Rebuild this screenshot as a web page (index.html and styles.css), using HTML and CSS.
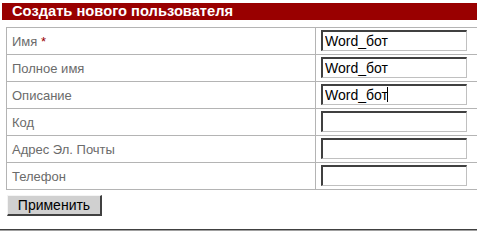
FILE: index.html
```html
<!DOCTYPE html>
<html lang="ru">
<head>
<meta charset="utf-8">
<title>Создать нового пользователя</title>
<link rel="stylesheet" href="styles.css">
</head>
<body>
<div class="page">
  <div class="title-bar">Создать нового пользователя</div>
  <table class="form-table">
    <tr>
      <td class="label">Имя <span class="req">*</span></td>
      <td class="field"><input class="text-input" type="text" value="Word_бот"></td>
    </tr>
    <tr>
      <td class="label">Полное имя</td>
      <td class="field"><input class="text-input" type="text" value="Word_бот"></td>
    </tr>
    <tr>
      <td class="label">Описание</td>
      <td class="field"><span class="caret-wrap"><input class="text-input" type="text" value="Word_бот"><span class="caret"></span></span></td>
    </tr>
    <tr>
      <td class="label">Код</td>
      <td class="field"><input class="text-input" type="text" value=""></td>
    </tr>
    <tr>
      <td class="label">Адрес Эл. Почты</td>
      <td class="field"><input class="text-input" type="text" value=""></td>
    </tr>
    <tr>
      <td class="label">Телефон</td>
      <td class="field"><input class="text-input" type="text" value=""></td>
    </tr>
  </table>
  <div class="actions">
    <button class="apply-btn" type="button">Применить</button>
  </div>
  <div class="bottom-rule"></div>
</div>
</body>
</html>
```

FILE: styles.css
```css
html, body {
  margin: 0;
  padding: 0;
  background: #ffffff;
  overflow: hidden;
}

.page {
  padding: 3px 0 0 2px;
  font-family: "Liberation Sans", Arial, sans-serif;
  width: 490px;
}

.title-bar {
  background: #990000;
  color: #ffffff;
  font-weight: bold;
  font-size: 14.7px;
  height: 17px;
  line-height: 17px;
  padding-left: 10px;
  white-space: nowrap;
}

.form-table {
  margin: 7px 0 0 4px;
  border-collapse: collapse;
  width: 480px;
}

.form-table td {
  border: 1px solid #b4b4b4;
  height: 26px;
  padding: 0;
  box-sizing: border-box;
}

.label {
  width: 309px;
  padding-left: 5px !important;
  font-size: 13px;
  color: #6b6b6b;
  vertical-align: middle;
}

.req {
  color: #990000;
}

.field {
  padding: 2px 0 3px 5px !important;
  vertical-align: top;
}

.text-input {
  display: block;
  box-sizing: border-box;
  width: 146px;
  height: 21px;
  margin: 0;
  padding: 0 0 0 2px;
  border-style: solid;
  border-width: 2px 1px 1px 2px;
  border-color: #404040 #c0c0c0 #c0c0c0 #404040;
  font-family: "Liberation Sans", Arial, sans-serif;
  font-size: 14px;
  color: #000000;
  background: #ffffff;
  outline: none;
}

.caret-wrap {
  position: relative;
  display: block;
  width: 146px;
}

.caret {
  position: absolute;
  left: 66px;
  top: 3px;
  width: 1px;
  height: 15px;
  background: #000000;
}

.actions {
  margin: 5px 0 0 5px;
}

.apply-btn {
  display: block;
  box-sizing: border-box;
  width: 95px;
  height: 21px;
  margin: 0;
  padding: 0;
  background: #d0d0d0;
  border-style: solid;
  border-width: 1px 2px 2px 1px;
  border-color: #f4f4f4 #404040 #404040 #f4f4f4;
  font-family: "Liberation Sans", Arial, sans-serif;
  font-size: 14px;
  color: #000000;
}

.bottom-rule {
  margin: 13px 0 0 -2px;
  border-top: 1px solid #404040;
  border-bottom: 1px solid #a0a0a0;
  width: 490px;
}
```
